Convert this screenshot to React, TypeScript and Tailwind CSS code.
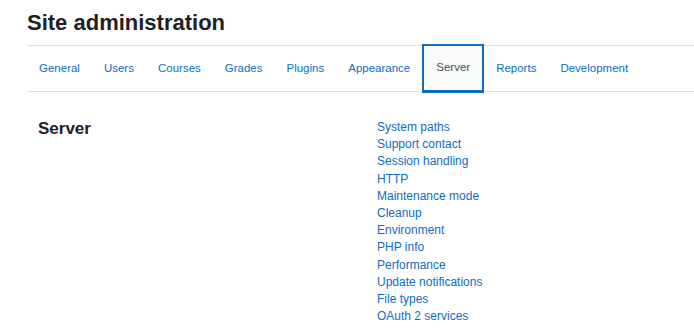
const tabs = ["General", "Users", "Courses", "Grades", "Plugins", "Appearance", "Server", "Reports", "Development"];

const links = [
  "System paths",
  "Support contact",
  "Session handling",
  "HTTP",
  "Maintenance mode",
  "Cleanup",
  "Environment",
  "PHP info",
  "Performance",
  "Update notifications",
  "File types",
  "OAuth 2 services",
];

export default function App() {
  return (
    <div className="min-h-screen bg-white pl-[27px] pt-[10px] font-['Liberation_Sans',Arial,sans-serif] text-[#1d2125]">
      <h1 className="mb-[9px] text-[22px] font-bold leading-[26px]">Site administration</h1>

      {/* Tabs */}
      <nav className="flex border-y border-[#dee2e6]">
        {tabs.map(tab =>
          tab === "Server" ? (
            <a
              key={tab}
              className="-my-[2px] flex h-[49px] items-center border-2 border-b-[3px] border-[#0f6cbf] bg-[#f8f9fa] px-[12px] text-[11.5px] text-[#495057]"
            >
              {tab}
            </a>
          ) : (
            <a key={tab} className="flex h-[45px] items-center px-[12px] text-[11.5px] text-[#0f6cbf]">
              {tab}
            </a>
          )
        )}
      </nav>

      {/* Category */}
      <div className="mt-[25px] flex">
        <h2 className="w-[350px] pl-[11px] text-[17px] font-bold leading-[24px]">Server</h2>
        <ul className="flex flex-col pt-[2px] text-[12px] leading-[17.2px]">
          {links.map(link => (
            <li key={link}>
              <a className="text-[#0f6cbf]">{link}</a>
            </li>
          ))}
        </ul>
      </div>
    </div>
  );
}
